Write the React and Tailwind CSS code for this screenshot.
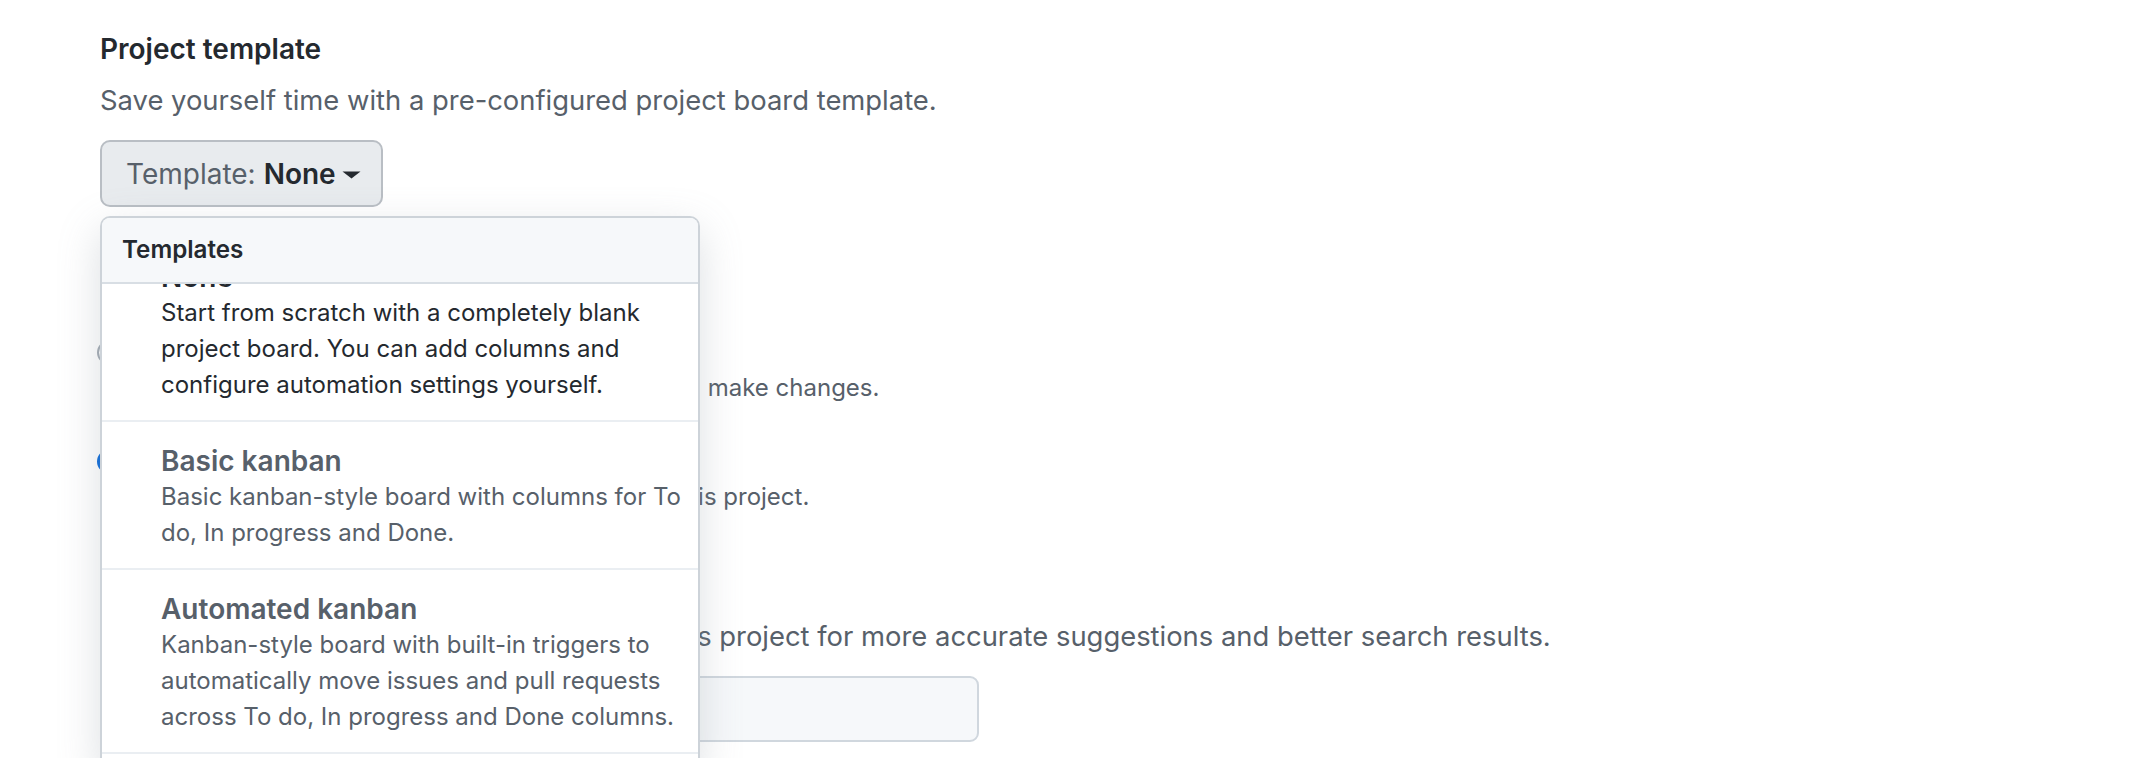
import React from "react";

const items = [
  {
    title: "None",
    desc: "Start from scratch with a completely blank project board. You can add columns and configure automation settings yourself.",
    selected: true,
  },
  {
    title: "Basic kanban",
    desc: "Basic kanban-style board with columns for To do, In progress and Done.",
  },
  {
    title: "Automated kanban",
    desc: "Kanban-style board with built-in triggers to automatically move issues and pull requests across To do, In progress and Done columns.",
  },
  {
    title: "Automated kanban with reviews",
    desc: "Everything included in the Automated kanban template with additional triggers for pull request reviews.",
  },
];

export default function App() {
  return (
    <div
      className="min-h-screen bg-white text-[#24292f]"
      style={{ fontFamily: "Inter, 'Noto Sans', sans-serif" }}
    >
      <div className="pl-[100px] pt-[31px]">
        <h3 className="text-[28px] leading-[36px] font-semibold">Project template</h3>
        <p className="mt-[15px] text-[27.4px] leading-[36px] text-[#57606a]">
          Save yourself time with a pre-configured project board template.
        </p>

        <div className="relative mt-[22px]">
          <button className="flex h-[67px] w-[283px] items-center rounded-[10px] border-2 border-[#b9bec4] bg-[#e8ebee] pl-[24px] text-[28px] text-[#57606a]">
            <span>Template:</span>
            <span className="ml-[8px] font-semibold text-[#24292f]">None</span>
            <svg className="ml-[6px] mt-[2px]" width="19" height="8" viewBox="0 0 19 8">
              <path d="M0.5 0.5 L18.5 0.5 L9.5 7.5 Z" fill="#24292f" />
            </svg>
          </button>

          <div className="absolute left-0 top-[76px] z-10 w-[600px] overflow-hidden rounded-t-[10px] border-2 border-b-0 border-[#cdd3d9] bg-white shadow-[0_14px_42px_rgba(140,149,159,0.3)]">
            <div className="flex h-[66px] items-center border-b-2 border-[#d8dee4] bg-[#f6f8fa] pl-[20px] text-[24.2px] font-semibold text-[#24292f]">
              Templates
            </div>
            <div className="h-[480px] overflow-hidden">
              <div className="-mt-[46px]">
                {items.map((it) => (
                  <div
                    key={it.title}
                    className="border-b-2 border-[#eaeef2] pb-[17px] pl-[59px] pr-[8px] pt-[21px]"
                  >
                    <div
                      className={
                        "text-[28px] leading-[36px] font-semibold " +
                        (it.selected ? "text-[#24292f]" : "text-[#57606a]")
                      }
                    >
                      {it.title}
                    </div>
                    <div
                      className={
                        "text-[24px] leading-[36px] " +
                        (it.selected ? "text-[#24292f]" : "text-[#57606a]")
                      }
                    >
                      {it.desc}
                    </div>
                  </div>
                ))}
              </div>
            </div>
          </div>
        </div>

        <h3 className="mt-[43px] text-[28px] leading-[36px] font-semibold">Visibility</h3>

        <div className="mt-[48px] flex">
          <div className="-ml-[3px] mt-[6px] h-[25px] w-[25px] shrink-0 rounded-full border-2 border-[#a3abb4] bg-white" />
          <div className="ml-[14px]">
            <div className="text-[28px] leading-[36px] font-semibold">Public</div>
            <div className="text-[24px] leading-[36px] text-[#57606a]">
              Anyone can see this project. You choose who can make changes.
            </div>
          </div>
        </div>

        <div className="mt-[37px] flex">
          <div className="-ml-[3px] mt-[6px] h-[25px] w-[25px] shrink-0 rounded-full border-[7px] border-[#0969da] bg-white" />
          <div className="ml-[14px]">
            <div className="text-[28px] leading-[36px] font-semibold">Private</div>
            <div className="text-[24px] leading-[36px] text-[#57606a]">
              You choose who can see and make changes to this project.
            </div>
          </div>
        </div>

        <h3 className="mt-[67px] text-[28px] leading-[36px] font-semibold">Linked repositories</h3>
        <p className="text-[27.4px] leading-[36px] text-[#57606a]">
          Search to link all your public repositories to this project for more accurate suggestions and better search results.
        </p>
        <div className="mt-[22px] h-[66px] w-[879px] rounded-[9px] border-2 border-[#d0d7de] bg-[#f6f8fa]" />
      </div>
    </div>
  );
}
